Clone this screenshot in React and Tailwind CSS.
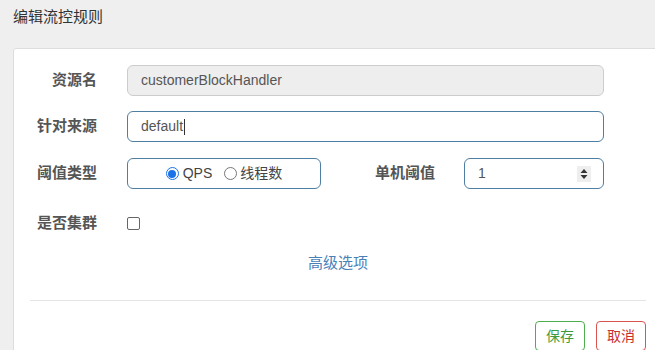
export default function App() {
  return (
    <div className="w-[655px] h-[350px] overflow-hidden bg-[#efefef] font-['Liberation_Sans','Noto_Sans_CJK_SC',sans-serif] text-[14px] text-[#333]">
      <div className="pl-[13px] pt-[7px] leading-[20px] text-[15px] text-[#333]">编辑流控规则</div>

      <div className="ml-[13px] mt-[21px] w-[660px] h-[320px] bg-white border border-[#ddd] rounded-tl-[3px]">
        <div className="pt-[16px]">
          <Row label="资源名">
            <div className="w-[477px] h-[31px] flex items-center pl-[13px] rounded-[6px] border border-[#ccc] bg-[#eee] text-[#555]">
              customerBlockHandler
            </div>
          </Row>

          <Row label="针对来源" className="mt-[15px]">
            <div className="w-[477px] h-[31px] flex items-center pl-[13px] rounded-[6px] border border-[#4f7ea3] text-[#555]">
              default<span className="w-px h-[16px] bg-[#333] ml-px" />
            </div>
          </Row>

          <Row label="阈值类型" className="mt-[16px]">
            <div className="w-[194px] h-[31px] flex items-center justify-center gap-[4px] rounded-[6px] border border-[#4f7ea3] text-[#444]">
              <span className="flex items-center">
                <span className="w-[13px] h-[13px] rounded-full border border-[#1a73e8] flex items-center justify-center">
                  <span className="w-[8px] h-[8px] rounded-full bg-[#1a73e8]" />
                </span>
                <span className="ml-[4px]">QPS</span>
              </span>
              <span className="flex items-center ml-[8px]">
                <span className="w-[13px] h-[13px] rounded-full border border-[#777]" />
                <span className="ml-[3px]">线程数</span>
              </span>
            </div>
            <div className="w-[114px] text-right font-bold text-[15px] text-[#555]">单机阈值</div>
            <div className="ml-[29px] w-[140px] h-[31px] flex items-center justify-between pl-[13px] pr-[12px] rounded-[6px] border border-[#4f7ea3] text-[#555]">
              <span>1</span>
              <span className="w-[14px] h-[16px] bg-[#eee] flex items-center justify-center">
                <svg width="8" height="12" viewBox="0 0 8 12">
                  <path d="M4 1 L7.5 5 L0.5 5 Z" fill="#333" />
                  <path d="M4 11 L7.5 7 L0.5 7 Z" fill="#333" />
                </svg>
              </span>
            </div>
          </Row>

          <Row label="是否集群" className="mt-[19px]">
            <span className="w-[13px] h-[13px] rounded-[2px] border border-[#666]" />
          </Row>

          <div className="mt-[14px] w-[648px] text-center text-[15px] leading-[20px] text-[#4a80b8]">高级选项</div>

          <div className="mt-[27px] ml-[16px] w-[616px] h-px bg-[#e5e5e5]" />

          <div className="w-[632px] mt-[20px] flex justify-end gap-[11px]">
            <button className="w-[50px] h-[30px] rounded-[4px] border border-[#4cae4c] text-[#3d9b3d] text-[14px] bg-white">保存</button>
            <button className="w-[50px] h-[30px] rounded-[4px] border border-[#d9534f] text-[#c9302c] text-[14px] bg-white">取消</button>
          </div>
        </div>
      </div>
    </div>
  )
}

function Row({ label, className = "", children }) {
  return (
    <div className={`flex items-center h-[31px] ${className}`}>
      <div className="w-[83px] text-right font-bold text-[15px] text-[#555]">{label}</div>
      <div className="ml-[30px] flex items-center">{children}</div>
    </div>
  )
}
